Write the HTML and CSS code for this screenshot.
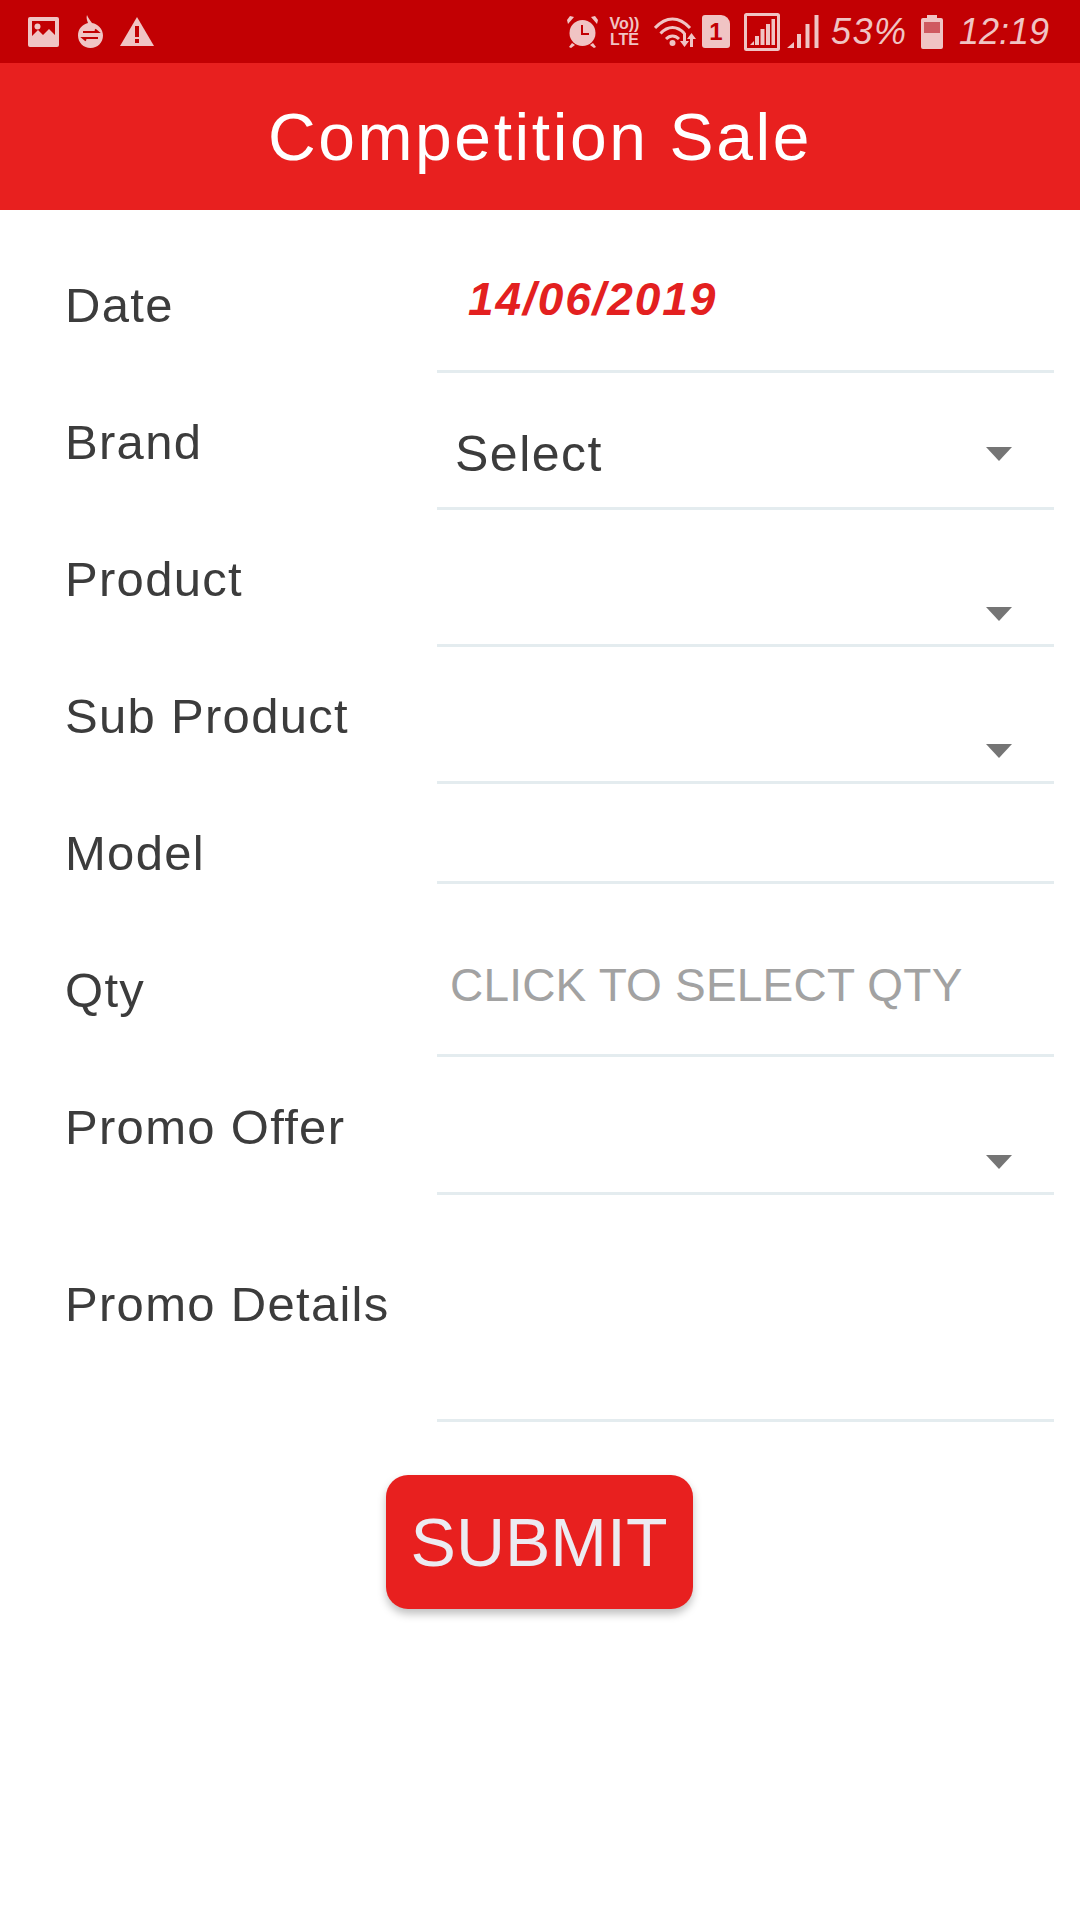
FILE: index.html
```html
<!DOCTYPE html>
<html lang="en">
<head>
<meta charset="utf-8">
<title>Competition Sale</title>
<link rel="stylesheet" href="styles.css">
</head>
<body>
<div class="status">
  <div class="status-left">
    <svg class="ic ic-image" viewBox="0 0 31 30"><path fill-rule="evenodd" d="M2 0h27a2 2 0 0 1 2 2v26a2 2 0 0 1-2 2H2a2 2 0 0 1-2-2V2a2 2 0 0 1 2-2zM4 4v15l6-6 5 5 6-6 6 6V4z"/><circle cx="9.500" cy="9.500" r="3"/></svg>
    <svg class="ic ic-bag" viewBox="0 0 25 33"><path d="M9 0c1 3 3 5 5 8 6 1 11 6 11 12.500C25 27.500 19.500 33 12.500 33S0 27.500 0 20.500C0 14 4 9.500 10 8 9 5 8 3 9 0z"/><path class="cut-line" d="M5 17h15l-3-2.500M20 23H5l3 2.500"/></svg>
    <svg class="ic ic-warn" viewBox="0 0 34 29"><path d="M17 0l17 29H0z"/><rect class="cut" x="15" y="9" width="4" height="11"/><rect class="cut" x="15" y="22" width="4" height="4"/></svg>
  </div>
  <div class="status-right">
    <svg class="ic ic-alarm" viewBox="0 0 31 33"><circle cx="15.500" cy="18" r="13"/><path d="M1 9l6-7-4-1-3 4zM30 9l-6-7 4-1 3 4zM5 28l-3 4 2 1 4-3zM26 28l3 4-2 1-4-3z"/><path class="cut-line" d="M15 10v9h7"/></svg>
    <div class="volte"><span>Vo))</span><span>LTE</span></div>
    <svg class="ic ic-wifi" viewBox="0 0 43 30"><path class="soft-line" d="M1 11c11-12 24-12 35 0M6.500 16.500c7.500-8 16.500-8 24 0M12 22c4-4 9-4 13 0"/><circle cx="18.500" cy="26" r="3"/><path d="M29 16h3v8h3l-4.500 6-4.500-6h3zM39 30h-3v-8h-3l4.500-6 4.500 6h-3z"/></svg>
    <div class="sim">1</div>
    <svg class="ic ic-signal-box" viewBox="0 0 36 38"><rect class="soft-line" x="1.500" y="1.500" width="33" height="35" rx="1"/><path d="M6 32l4-4v4zM11 32v-9h4v9zM16.500 32V16h4v16zM22 32V11h4v21zM27.500 32V6h3.500v26z"/></svg>
    <svg class="ic ic-signal" viewBox="0 0 32 33"><path d="M0 33l7-6v6zM10 33V19h4v14zM18.500 33V9h4v24zM27.500 33V0h4v33z"/></svg>
    <span class="st-text st-pct">53%</span>
    <svg class="ic ic-batt" viewBox="0 0 22 34"><path fill-rule="evenodd" d="M6 0h10v3h4a2 2 0 0 1 2 2v27a2 2 0 0 1-2 2H2a2 2 0 0 1-2-2V5a2 2 0 0 1 2-2h4z"/><rect class="batt-fill" x="3" y="7" width="16" height="11"/></svg>
    <span class="st-text st-time">12:19</span>
  </div>
</div>
<header class="appbar">Competition Sale</header>
<main class="form">
  <div class="row row-date">
    <div class="label">Date</div>
    <div class="field"><span class="date">14/06/2019</span></div>
  </div>
  <div class="row row-std">
    <div class="label">Brand</div>
    <div class="field field-select"><span class="value">Select</span><i class="caret caret-mid"></i></div>
  </div>
  <div class="row row-std">
    <div class="label">Product</div>
    <div class="field field-select"><i class="caret"></i></div>
  </div>
  <div class="row row-std">
    <div class="label">Sub Product</div>
    <div class="field field-select"><i class="caret"></i></div>
  </div>
  <div class="row row-model">
    <div class="label">Model</div>
    <div class="field"></div>
  </div>
  <div class="row row-qty">
    <div class="label">Qty</div>
    <div class="field"><span class="placeholder">CLICK TO SELECT QTY</span></div>
  </div>
  <div class="row row-offer">
    <div class="label">Promo Offer</div>
    <div class="field field-select"><i class="caret"></i></div>
  </div>
  <div class="row row-details">
    <div class="label">Promo Details</div>
    <div class="field"></div>
  </div>
  <div class="actions"><button class="submit" type="button">SUBMIT</button></div>
</main>
</body>
</html>
```
FILE: styles.css
```css
* { box-sizing: border-box; }
html, body { margin: 0; padding: 0; }
body { width: 1080px; height: 1920px; background: #fff; font-family: "Liberation Sans", Arial, sans-serif; overflow: hidden; }

.status { height: 63px; background: #c20003; display: flex; justify-content: space-between; align-items: center; padding: 0 31px 0 28px; }
.status-left, .status-right { display: flex; align-items: center; }
.ic { display: block; fill: #f0c4c4; flex: none; }
.cut { fill: #c20003; }
.cut-line { fill: none; stroke: #c20003; stroke-width: 2; }
.soft-line { fill: none; stroke: #f0c4c4; stroke-width: 3; }
.ic-image { width: 31px; height: 30px; }
.ic-bag { width: 25px; height: 33px; margin-left: 19px; }
.ic-warn { width: 34px; height: 29px; margin-left: 17px; }
.ic-alarm { width: 31px; height: 33px; }
.volte { width: 31px; margin-left: 11px; display: flex; flex-direction: column; align-items: center; color: #f0c4c4; font-size: 16px; line-height: 16px; font-weight: 700; }
.ic-wifi { width: 43px; height: 30px; margin-left: 14px; }
.sim { width: 28px; height: 33px; margin-left: 5px; background: #f0c4c4; color: #c20003; border-radius: 3px 9px 3px 3px; font-size: 24px; font-weight: 700; line-height: 33px; text-align: center; }
.ic-signal-box { width: 36px; height: 38px; margin-left: 14px; }
.ic-signal { width: 32px; height: 33px; margin-left: 7px; }
.st-text { color: #f0c4c4; font-family: "Liberation Sans", Arial, sans-serif; font-style: italic; font-weight: 400; font-size: 36px; line-height: 40px; white-space: nowrap; }
.st-pct { width: 78px; margin-left: 12px; letter-spacing: 1.500px; }
.ic-batt { width: 22px; height: 34px; margin-left: 12px; }
.batt-fill { fill: #cf5a60; }
.st-time { width: 90px; margin-left: 16px; letter-spacing: 0; }

.appbar { height: 147px; background: #e8201f; color: #fff; display: flex; align-items: center; justify-content: center; font-size: 66px; letter-spacing: 2.600px; }

.row { display: flex; }
.label { width: 437px; padding-left: 65px; font-size: 49px; line-height: 48px; color: #3c3c3c; letter-spacing: 1.300px; white-space: nowrap; }
.field { width: 617px; border-bottom: 3px solid #e4ecef; position: relative; display: flex; }
.row-date { height: 163px; }
.row-date .label { padding-top: 71px; }
.row-std { height: 137px; }
.row-std .label { padding-top: 45px; }
.row-model { height: 100px; }
.row-model .label { padding-top: 45px; }
.row-qty { height: 173px; }
.row-qty .label { padding-top: 82px; }
.row-offer { height: 138px; }
.row-offer .label { padding-top: 46px; }
.row-details { height: 227px; }
.row-details .label { padding-top: 85px; }

.date { margin: 61px 0 0 31px; color: #e32020; font-size: 46px; line-height: 56px; font-weight: 700; font-style: italic; letter-spacing: 1.900px; align-self: flex-start; }
.value { margin: 57px 0 0 18px; font-size: 50px; line-height: 48px; color: #3c3c3c; letter-spacing: 1.500px; align-self: flex-start; }
.placeholder { margin: 77px 0 0 13px; font-size: 46px; line-height: 48px; color: #a2a2a2; white-space: nowrap; letter-spacing: .2px; align-self: flex-start; }
.field-select { align-items: flex-end; }
.caret { position: absolute; right: 42px; bottom: 23px; width: 0; height: 0; border-left: 13px solid transparent; border-right: 13px solid transparent; border-top: 14px solid #757575; }
.caret-mid { bottom: 46px; }

.actions { display: flex; justify-content: center; padding: 53px 2px 0 0; }
.submit { width: 307px; height: 134px; border: 0; border-radius: 22px; background: #e8201f; color: #ecebf1; font-family: inherit; font-size: 68px; padding: 0; box-shadow: 0 5px 8px rgba(0, 0, 0, .25); }
```
